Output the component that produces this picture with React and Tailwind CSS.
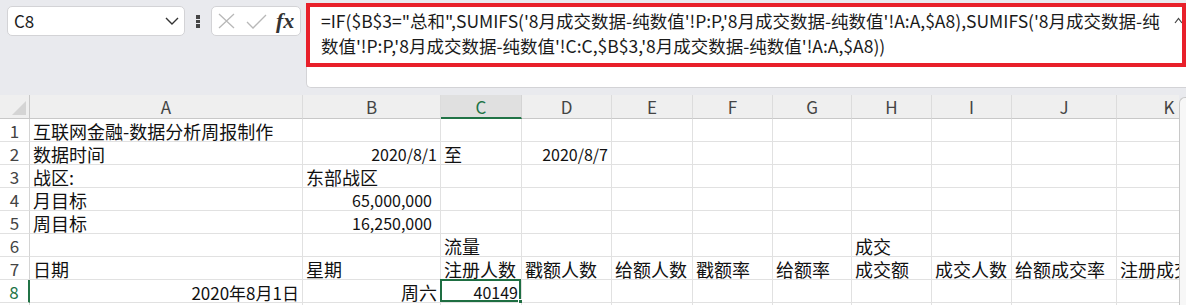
import React from "react";

const FONT = { fontFamily: '"Noto Sans CJK SC", "Noto Sans", sans-serif' };

const LETTERS = ["A", "B", "C", "D", "E", "F", "G", "H", "I", "J", "K"];

// each row: 11 cells, [text, kind] where kind: "t" left text, "r" right text, "n" right number
const ROWS = [
  [["互联网金融-数据分析周报制作", "t"]],
  [["数据时间", "t"], ["2020/8/1", "n"], ["至", "t"], ["2020/8/7", "n"]],
  [["战区:", "t"], ["东部战区", "t"]],
  [["月目标", "t"], ["65,000,000", "acc"]],
  [["周目标", "t"], ["16,250,000", "acc"]],
  [null, null, ["流量", "t"], null, null, null, null, ["成交", "t"]],
  [
    ["日期", "t"],
    ["星期", "t"],
    ["注册人数", "t"],
    ["戳额人数", "t"],
    ["给额人数", "t"],
    ["戳额率", "t"],
    ["给额率", "t"],
    ["成交额", "t"],
    ["成交人数", "t"],
    ["给额成交率", "t"],
    ["注册成交率", "t"],
  ],
  [["2020年8月1日", "mix"], ["周六", "r"], ["40149", "n"]],
  [],
];

function Cell({ cell, selected }) {
  const kind = cell ? cell[1] : "t";
  const align =
    kind === "t" ? "justify-start pl-[3px]" : kind === "acc" ? "justify-end pr-[8px]" : "justify-end pr-[3px]";
  const size =
    kind === "n" || kind === "acc"
      ? "text-[16px] leading-[16px] pb-[2px]"
      : kind === "mix"
      ? "text-[17px] leading-[17px] pb-[1px]"
      : "text-[18px] leading-[18px] pb-[1px]";
  return (
    <div
      className={`relative flex items-end overflow-visible whitespace-nowrap border-r border-b border-[#e1e1e1] bg-white text-[#111] ${align}`}
    >
      {cell && <span className={size}>{cell[0]}</span>}
      {selected && (
        <>
          <div className="pointer-events-none absolute -left-[1px] -top-[1px] right-0 bottom-0 border-2 border-[#1e6e42]" />
          <div className="absolute -bottom-[3px] -right-[3px] h-[6px] w-[6px] border border-white bg-[#1e6e42]" />
        </>
      )}
    </div>
  );
}

function Toolbar() {
  return (
    <div className="flex h-[95px] items-start bg-[#e9eaee]">
      {/* name box */}
      <div className="ml-[7px] mt-[6px] flex h-[30px] w-[178px] items-center justify-between rounded-[5px] border border-[#d3d3d6] bg-white pl-[6px] pr-[5px]">
        <span className="text-[17px] text-[#1c1c1c]">C8</span>
        <svg width="14" height="8" viewBox="0 0 14 8" fill="none">
          <path d="M1 1l6 6 6-6" stroke="#333" strokeWidth="1.4" />
        </svg>
      </div>
      {/* dots */}
      <div className="ml-[11px] mt-[15px] flex flex-col gap-[1px]">
        <div className="h-[3.5px] w-[4px] bg-[#444]" />
        <div className="h-[3.5px] w-[4px] bg-[#444]" />
        <div className="h-[3.5px] w-[4px] bg-[#444]" />
      </div>
      {/* fx box */}
      <div className="ml-[11px] mt-[6px] flex h-[30px] w-[90px] items-center rounded-[5px] border border-[#d3d3d6] bg-white pl-[6px]">
        <svg width="17" height="16" viewBox="0 0 17 16" fill="none">
          <path d="M1 1l15 14M16 1L1 15" stroke="#b8b8b8" strokeWidth="1.3" />
        </svg>
        <svg className="ml-[11px]" width="21" height="15" viewBox="0 0 21 15" fill="none">
          <path d="M1 8l6 6L20 1" stroke="#b8b8b8" strokeWidth="1.3" />
        </svg>
        <span
          className="ml-[9px] text-[22px] font-bold italic leading-none text-[#333]"
          style={{ fontFamily: '"Liberation Serif", serif' }}
        >
          fx
        </span>
      </div>
      {/* formula */}
      <div className="relative ml-[5px] mt-[3px] h-[85px] flex-1 rounded-bl-[5px] border-l border-b border-[#d3d3d6] bg-white pl-[14px] pt-[5px]">
        <div className="text-[17.5px] leading-[25px] text-[#1a1a1a] whitespace-nowrap">
          =IF($B$3="总和",SUMIFS('8月成交数据-纯数值'!P:P,'8月成交数据-纯数值'!A:A,$A8),SUMIFS('8月成交数据-纯
          <br />
          数值'!P:P,'8月成交数据-纯数值'!C:C,$B$3,'8月成交数据-纯数值'!A:A,$A8))
        </div>
        <svg className="absolute right-[3px] top-[14px]" width="9" height="7" viewBox="0 0 9 7" fill="none">
          <path d="M1 6l3.5-4.5L8 6" stroke="#444" strokeWidth="1.2" />
        </svg>
        <div className="pointer-events-none absolute -left-[1px] top-0 right-0 h-[64px] border-4 border-[#e8202a]" />
      </div>
    </div>
  );
}

function Sheet() {
  return (
    <div className="flex h-[210px] bg-[#e9eaee]">
      <div className="w-[1179px] overflow-hidden">
        <div className="grid w-max grid-cols-[30px_273px_138px_81px_90px_81px_80px_79px_80px_80px_105px_105px] grid-rows-[24px_repeat(9,23px)]">
          {/* corner */}
          <div className="relative border-r border-b border-[#c8c8c8] bg-[#efefef]">
            <svg className="absolute bottom-[3px] right-[3px]" width="14" height="14" viewBox="0 0 14 14">
              <path d="M14 0V14H0Z" fill="#d4d4d4" />
            </svg>
          </div>
          {LETTERS.map((l) => (
            <div
              key={l}
              className={
                l === "C"
                  ? "flex items-center justify-center border-r border-[#d4d4d4] border-b-2 border-b-[#217346] bg-[#e0e0e0] pt-[1px] text-[17px] text-[#217346]"
                  : "flex items-center justify-center border-r border-b border-r-[#dcdcdc] border-b-[#c8c8c8] bg-[#efefef] text-[17px] text-[#444]"
              }
            >
              {l}
            </div>
          ))}
          {ROWS.map((row, ri) => (
            <React.Fragment key={ri}>
              <div
                className={
                  ri === 7
                    ? "flex items-end justify-center border-r-2 border-b border-r-[#217346] border-b-[#e1e1e1] bg-white pb-[1px] text-[17px] leading-[18px] text-[#217346]"
                    : "flex items-end justify-center border-r border-b border-r-[#d4d4d4] border-b-[#e1e1e1] bg-white pb-[1px] text-[17px] leading-[18px] text-[#444]"
                }
              >
                {ri + 1}
              </div>
              {LETTERS.map((l, ci) => (
                <Cell key={l} cell={row[ci] || null} selected={ri === 7 && ci === 2} />
              ))}
            </React.Fragment>
          ))}
        </div>
      </div>
      <div className="mt-[2px] flex-1 rounded-tl-[6px] border-l border-t border-[#c8c8c8] bg-[#f7f7f7]" />
    </div>
  );
}

export default function App() {
  return (
    <div className="h-[305px] w-[1186px] overflow-hidden bg-[#e9eaee]" style={FONT}>
      <Toolbar />
      <Sheet />
    </div>
  );
}
